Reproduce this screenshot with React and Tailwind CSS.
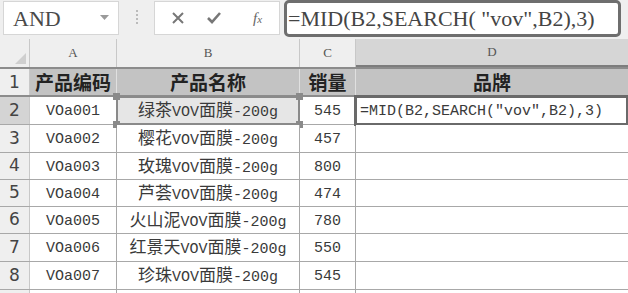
import React from "react";

const rows = [
  ["VOa001", "绿茶", "545"],
  ["VOa002", "樱花", "457"],
  ["VOa003", "玫瑰", "800"],
  ["VOa004", "芦荟", "474"],
  ["VOa005", "火山泥", "780"],
  ["VOa006", "红景天", "550"],
  ["VOa007", "珍珠", "545"],
];
const heights = ["h-[28px]", "h-[28px]", "h-[27px]", "h-[27px]", "h-[27px]", "h-[28px]", "h-[28px]"];

const mono = { fontFamily: '"Liberation Mono", "Noto Sans CJK SC", monospace' };
const cjk = { fontFamily: '"Noto Sans CJK SC", sans-serif' };

function Mixed({ text }) {
  // split Chinese and Latin runs so each gets its own width
  const parts = text.split(/([\u4e00-\u9fff]+)/).filter(Boolean);
  return (
    <span className="whitespace-nowrap text-[#3a3a3a]">
      {parts.map((p, i) =>
        /[\u4e00-\u9fff]/.test(p) ? (
          <span key={i} style={cjk} className="text-[17px]">{p}</span>
        ) : (
          <span key={i} style={mono} className="text-[15px]">{p}</span>
        )
      )}
    </span>
  );
}

function Handle({ pos }) {
  return <div className={`absolute w-[7px] h-[7px] bg-[#8a8a8a] ${pos}`} />;
}

export default function App() {
  return (
    <div className="w-[628px] h-[293px] bg-[#efefef] overflow-hidden text-[#333]">
      {/* formula bar */}
      <div className="flex items-start h-[39px]">
        <div className="ml-[3px] mt-px w-[116px] h-[34px] bg-white border border-[#d6d6d6] flex items-center justify-between pl-[9px] pr-[9px]">
          <span className="text-[22px] text-[#4a4a4a]" style={{ fontFamily: '"Liberation Serif", serif' }}>AND</span>
          <svg width="9" height="6" viewBox="0 0 9 6"><path d="M0 0h9L4.5 5z" fill="#9a9a9a" /></svg>
        </div>
        <div className="w-[35px] h-[34px] flex flex-col items-center justify-center gap-[2px]">
          <div className="w-[2px] h-[2px] bg-[#bbb]" />
          <div className="w-[2px] h-[2px] bg-[#bbb]" />
          <div className="w-[2px] h-[2px] bg-[#bbb]" />
          <div className="w-[2px] h-[2px] bg-[#bbb]" />
        </div>
        <div className="mt-px w-[126px] h-[34px] bg-white border border-[#d6d6d6] flex items-center">
          <svg className="ml-[17px]" width="12" height="12" viewBox="0 0 12 12"><path d="M1 1l10 10M11 1L1 11" stroke="#777" strokeWidth="2" /></svg>
          <svg className="ml-[23px]" width="14" height="12" viewBox="0 0 14 12"><path d="M1 6l4 4 8-9" stroke="#777" strokeWidth="2.6" fill="none" /></svg>
          <span className="ml-[32px] text-[15px] italic text-[#666]" style={{ fontFamily: '"Liberation Serif", serif' }}>
            f<span className="text-[11px]">x</span>
          </span>
        </div>
        <div className="ml-[4px] w-[337px] h-[37px] bg-white border-[3px] border-[#6e6e6e] rounded-[5px] flex items-center pl-[1px]">
          <span className="text-[22px] text-[#444] whitespace-nowrap" style={{ fontFamily: '"Liberation Serif", serif' }}>
            =MID(B2,SEARCH( "vov",B2),3)
          </span>
        </div>
      </div>

      {/* column headers */}
      <div className="flex h-[28px] text-[13px] text-[#555]" style={{ fontFamily: '"Liberation Serif", serif' }}>
        <div className="w-[30px] border-r border-[#c8c8c8] flex items-end justify-end p-[3px]">
          <svg width="11" height="11" viewBox="0 0 11 11"><path d="M11 0v11H0z" fill="#cfcfcf" /></svg>
        </div>
        <div className="w-[87px] border-r border-[#c8c8c8] flex items-center justify-center">A</div>
        <div className="w-[183px] border-r border-[#c8c8c8] flex items-center justify-center">B</div>
        <div className="w-[56px] border-r border-[#c8c8c8] flex items-center justify-center">C</div>
        <div className="flex-1 bg-[#d6d6d6] border-b-[2px] border-[#7d7d7d] flex items-center justify-center">D</div>
      </div>

      {/* row 1 */}
      <div className="flex h-[30px] border-y-2 border-[#8c8c8c] bg-[#c3c3c3] text-[19px] font-bold text-[#222]" style={cjk}>
        <div className="w-[30px] bg-[#efefef] border-r border-[#c8c8c8] flex items-end justify-center text-[17px] font-normal text-[#444]" style={{ fontFamily: '"DejaVu Sans", sans-serif' }}>1</div>
        <div className="w-[87px] border-r border-[#e0e0e0] flex items-center justify-center">产品编码</div>
        <div className="w-[183px] border-r border-[#e0e0e0] flex items-center justify-center">产品名称</div>
        <div className="w-[56px] border-r border-[#e0e0e0] flex items-center justify-center">销量</div>
        <div className="flex-1 flex items-center justify-center">品牌</div>
      </div>

      {/* data rows */}
      {rows.map((r, i) => (
        <div key={i} className={`flex ${heights[i]} border-b border-[#a8a8a8]`}>
          <div
            className={`w-[30px] border-r border-[#c8c8c8] flex items-end justify-center pb-[1px] text-[17px] text-[#444] ${i === 0 ? "bg-[#d4d4d4]" : "bg-[#efefef]"}`}
            style={{ fontFamily: '"DejaVu Sans", sans-serif' }}
          >
            {i + 2}
          </div>
          <div className="w-[87px] bg-white border-r border-[#a8a8a8] flex items-center justify-center">
            <Mixed text={r[0]} />
          </div>
          <div className={`relative w-[183px] border-r border-[#a8a8a8] flex items-center justify-center ${i === 0 ? "bg-[#e6e6e6]" : "bg-white"}`}>
            <Mixed text={`${r[1]}VOV面膜-200g`} />
            {i === 0 && (
              <>
                <div className="absolute -left-px -top-px -right-px -bottom-px border-2 border-[#8a8a8a]" />
                <Handle pos="-left-[4px] -top-[4px]" />
                <Handle pos="-right-[4px] -top-[4px]" />
                <Handle pos="-left-[4px] -bottom-[4px]" />
                <Handle pos="-right-[4px] -bottom-[4px]" />
              </>
            )}
          </div>
          <div className="w-[56px] bg-white border-r border-[#a8a8a8] flex items-center justify-center">
            <Mixed text={r[2]} />
          </div>
          <div className="relative flex-1 bg-white flex items-center pl-[4px]">
            {i === 0 && (
              <>
                <Mixed text={'=MID(B2,SEARCH("vov",B2),3)'} />
                <div className="absolute -left-[2px] -top-[2px] -right-[1px] -bottom-[2px] border-[3px] border-[#6a6a6a]" />
              </>
            )}
          </div>
        </div>
      ))}
      <div className="flex h-[4px]">
        <div className="w-[30px] bg-[#efefef] border-r border-[#c8c8c8]" />
        <div className="w-[87px] bg-white border-r border-[#a8a8a8]" />
        <div className="w-[183px] bg-white border-r border-[#a8a8a8]" />
        <div className="w-[56px] bg-white border-r border-[#a8a8a8]" />
        <div className="flex-1 bg-white" />
      </div>
    </div>
  );
}
